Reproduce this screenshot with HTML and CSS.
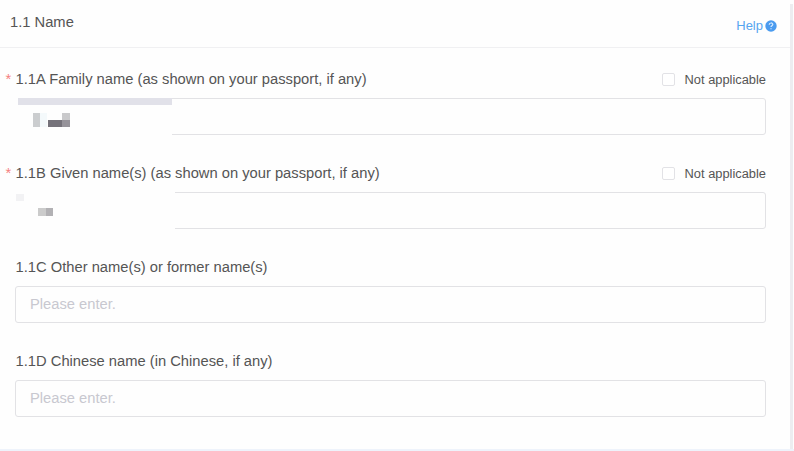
FILE: index.html
```
<!DOCTYPE html>
<html lang="en">
<head>
    <meta charset="UTF-8">
    <meta name="viewport" content="width=device-width, initial-scale=1.0">
    <title>Name</title>
    <link rel="stylesheet" href="styles.css">
</head>
<body>
    <main class="card">
        <header class="card-header">
            <h1 class="title">1.1 Name</h1>
            <a class="help">Help
                <svg class="help-icon" viewBox="0 0 12 12">
                    <circle cx="6" cy="6" r="5.7" fill="#4a9bef"/>
                    <path d="M4.2 4.8C4.2 2.4 7.8 2.4 7.8 4.6C7.8 5.8 6 5.8 6 7.1M6 8.2V9.3" fill="none" stroke="#d9ecff" stroke-width="1.2"/>
                </svg>
            </a>
        </header>
        <form class="form">
            <div class="field">
                <div class="field-head">
                    <label class="label required" for="family"><span>1.1A Family name (as shown on your passport, if any)</span></label>
                    <label class="option"><input class="checkbox" type="checkbox">Not applicable</label>
                </div>
                <div class="control">
                    <input class="input" type="text" id="family">
                    <svg class="mask" viewBox="0 0 162 40">
                        <rect width="159" height="40" fill="#fefefe"/>
                        <rect x="5" y="1" width="154" height="7" fill="#e1e1e9"/>
                        <rect x="20" y="16" width="7" height="14" fill="#cbcdcf"/>
                        <rect x="27" y="16" width="7" height="14" fill="#f4f9fb"/>
                        <rect x="35" y="23" width="14" height="7" fill="#75727a"/>
                        <rect x="49" y="16" width="8" height="7" fill="#c9c9cb"/>
                        <rect x="49" y="23" width="8" height="7" fill="#96939a"/>
                    </svg>
                </div>
            </div>
            <div class="field">
                <div class="field-head">
                    <label class="label required" for="given"><span>1.1B Given name(s) (as shown on your passport, if any)</span></label>
                    <label class="option"><input class="checkbox" type="checkbox">Not applicable</label>
                </div>
                <div class="control">
                    <input class="input" type="text" id="given">
                    <svg class="mask" viewBox="0 0 162 40">
                        <rect width="162" height="40" fill="#fefefe"/>
                        <rect x="3" y="3" width="8" height="7" fill="#f2f2f4"/>
                        <rect x="25" y="17" width="8" height="8" fill="#cbcbcb"/>
                        <rect x="33" y="17" width="7" height="8" fill="#b2b1b4"/>
                    </svg>
                </div>
            </div>
            <div class="field">
                <div class="field-head">
                    <label class="label" for="other"><span>1.1C Other name(s) or former name(s)</span></label>
                </div>
                <div class="control">
                    <input class="input" type="text" id="other" placeholder="Please enter.">
                </div>
            </div>
            <div class="field">
                <div class="field-head">
                    <label class="label" for="chinese"><span>1.1D Chinese name (in Chinese, if any)</span></label>
                </div>
                <div class="control">
                    <input class="input" type="text" id="chinese" placeholder="Please enter.">
                </div>
            </div>
        </form>
    </main>
</body>
</html>
```
FILE: styles.css
```
* {
    box-sizing: border-box;
}
body {
    margin: 0;
    height: 451px;
    overflow: hidden;
    background: #fefefe;
    font-family: "Liberation Sans", Arial, sans-serif;
    color: #555;
}
.card {
    width: 794px;
    height: 451px;
    padding-right: 4px;
    border-bottom: 2px solid #eef3fb;
    background: linear-gradient(#ededf0, #ededf0) 790px 4px / 3px 100% no-repeat;
}
.card-header {
    display: flex;
    justify-content: space-between;
    align-items: center;
    height: 48px;
    padding: 0 13px 0 10px;
    border-bottom: 1px solid #f0f0f2;
}
.title {
    margin: 0 0 3px;
    font-size: 14.72px;
    font-weight: normal;
}
.help {
    display: flex;
    align-items: center;
    gap: 2px;
    margin-top: 4px;
    font-size: 13px;
    color: #56a5f0;
}
.help-icon {
    width: 12px;
    height: 12px;
}
.form {
    padding: 12px 24px 0 15px;
}
.field {
    margin-bottom: 19px;
}
.field-head {
    display: flex;
    justify-content: space-between;
    align-items: center;
    height: 38px;
}
.label {
    display: flex;
    padding-left: 0.6px;
    font-size: 14.72px;
}
.required::before {
    content: "*";
    width: 10px;
    margin-left: -10px;
    color: #f58080;
}
.option {
    display: flex;
    align-items: center;
    gap: 10px;
    font-size: 12.85px;
}
.checkbox {
    appearance: none;
    width: 13px;
    height: 13px;
    margin: 0;
    border: 1px solid #e2e2e6;
    border-radius: 2px;
    background: #fff;
}
.control {
    position: relative;
}
.input {
    display: block;
    width: 100%;
    height: 37px;
    padding: 0 14px 2px;
    border: 1px solid #e2e2e5;
    border-radius: 3px;
    background: #fefefe;
    font: 14.72px "Liberation Sans", Arial, sans-serif;
}
.input::placeholder {
    color: #c8c8d0;
}
.mask {
    position: absolute;
    top: -1px;
    left: -2px;
    width: 162px;
    height: 40px;
}
```
